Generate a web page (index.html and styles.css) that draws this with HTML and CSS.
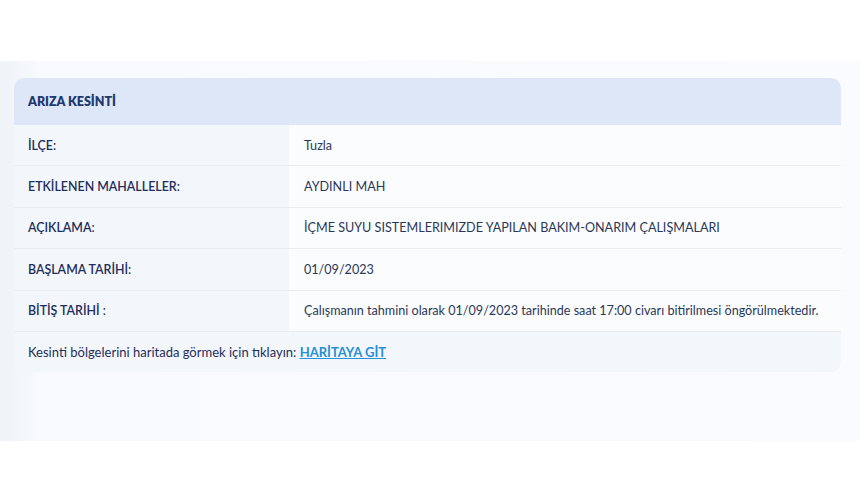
FILE: index.html
```html
<!DOCTYPE html>
<html lang="tr">
    <head>
        <title>Arıza Kesinti</title>
        <link rel="stylesheet" href="styles.css">
    </head>
    <body>
        <div class="section">
            <div class="card">
                <div class="card-header">ARIZA KESİNTİ</div>
                <table class="info">
                    <tbody>
                        <tr>
                            <th>İLÇE:</th>
                            <td>Tuzla</td>
                        </tr>
                        <tr>
                            <th>ETKİLENEN MAHALLELER:</th>
                            <td>AYDINLI MAH</td>
                        </tr>
                        <tr>
                            <th>AÇIKLAMA:</th>
                            <td>İÇME SUYU SISTEMLERIMIZDE YAPILAN BAKIM-ONARIM ÇALIŞMALARI</td>
                        </tr>
                        <tr>
                            <th>BAŞLAMA TARİHİ:</th>
                            <td>01/09/2023</td>
                        </tr>
                        <tr>
                            <th>BİTİŞ TARİHİ <span class="light">:</span></th>
                            <td>Çalışmanın tahmini olarak 01/09/2023 tarihinde saat 17:00 civarı bitirilmesi öngörülmektedir.</td>
                        </tr>
                    </tbody>
                </table>
                <div class="card-footer">
                    Kesinti bölgelerini haritada görmek için tıklayın:&nbsp;<a href="#" class="map-link">HARİTAYA GİT</a>
                </div>
            </div>
        </div>
    </body>
</html>
```

FILE: styles.css
```css
body {
    margin: 0;
    background: #ffffff;
    font-family: Lato, "Noto Sans", sans-serif;
    color: #2a3a5c;
}
.section {
    margin-top: 61px;
    height: 380px;
    padding: 17px 19px 0 14px;
    box-sizing: border-box;
    background: linear-gradient(to right, #eef3f8 0, #f8fafd 40px, #f9fbfe 100%);
}
.card {
    border-radius: 10px;
    overflow: hidden;
}
.card-header {
    height: 47px;
    display: flex;
    align-items: center;
    padding-left: 14px;
    background: #dee7f7;
    color: #1f3a6e;
    font-weight: 800;
    font-size: 12.5px;
}
.info {
    width: 100%;
    border-collapse: collapse;
    font-size: 12.6px;
}
.info th,
.info td {
    height: 40.4px;
    padding: 0;
    text-align: left;
    border-bottom: 1px solid #eaedf2;
}
.info th {
    width: 261px;
    padding-left: 14px;
    background: #f3f6fb;
    color: #1f2f5a;
    font-size: 12.4px;
    font-weight: 600;
}
.info th .light {
    font-weight: 400;
}
.info td {
    padding-left: 15px;
    background: #fbfcfe;
    color: #2a3858;
}
.card-footer {
    height: 40px;
    display: flex;
    align-items: center;
    padding-left: 14px;
    background: #f3f6fb;
    font-size: 13px;
    color: #1f2f5a;
}
.map-link {
    color: #2590d6;
    font-weight: 700;
}
```
